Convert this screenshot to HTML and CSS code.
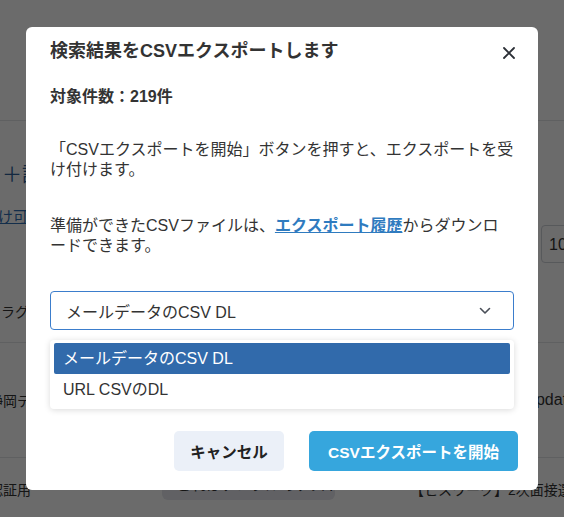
FILE: index.html
```html
<!DOCTYPE html>
<html lang="ja">
<head>
  <meta charset="UTF-8">
  <meta name="viewport" content="width=device-width, initial-scale=1.0">
  <title>CSVエクスポート</title>
  <link rel="stylesheet" href="styles.css">
</head>
<body>
  <div class="page">
    <div class="page-top"></div>
    <div class="block settings">
      <div class="add-link">＋設定を追加</div>
      <div class="settings-row">
        <a class="accept-link">け可能な設定</a>
        <div class="num-box">10</div>
      </div>
      <div class="flag">フラグ</div>
    </div>
    <div class="block row">
      <span class="cell-left">静岡テスト</span>
      <span class="cell-right">update</span>
    </div>
    <div class="block row last">
      <span class="cell-left">認証用</span>
      <span class="pill">これはテンプルのテスト</span>
      <span class="cell-title">【ヒスワーク】2次面接選考</span>
    </div>
  </div>

  <div class="overlay"></div>

  <div class="modal">
    <div class="modal-head">
      <h2>検索結果をCSVエクスポートします</h2>
      <svg class="close" width="12" height="12" viewBox="0 0 12 12">
        <path d="M1 1 L11 11 M11 1 L1 11" stroke="#2b2f36" stroke-width="1.8" stroke-linecap="round"/>
      </svg>
    </div>
    <p class="count">対象件数：219件</p>
    <p class="text">「CSVエクスポートを開始」ボタンを押すと、エクスポートを受け付けます。</p>
    <p class="text">準備ができたCSVファイルは、<a class="history">エクスポート履歴</a>からダウンロードできます。</p>

    <div class="field">
      <div class="select">
        <span>メールデータのCSV DL</span>
        <svg width="12" height="8" viewBox="0 0 12 8">
          <path d="M1.5 1.5 L6 6 L10.5 1.5" fill="none" stroke="#4a4f58" stroke-width="1.6" stroke-linecap="round" stroke-linejoin="round"/>
        </svg>
      </div>
      <ul class="options">
        <li class="active">メールデータのCSV DL</li>
        <li>URL CSVのDL</li>
      </ul>
    </div>

    <div class="modal-foot">
      <button class="btn btn-cancel">キャンセル</button>
      <button class="btn btn-primary">CSVエクスポートを開始</button>
    </div>
  </div>
</body>
</html>
```

FILE: styles.css
```css
body {
  margin: 0;
  padding: 0;
  background: #fff;
  overflow: hidden;
  font-family: "Liberation Sans", "Noto Sans CJK JP", sans-serif;
  color: #333;
}
.page {
  width: 564px;
  height: 517px;
  overflow: hidden;
}
.page-top {
  height: 120px;
  border-bottom: 1px solid #e2e4e8;
}
.block {
  border-bottom: 1px solid #e2e4e8;
}
.settings {
  height: 221px;
}
.add-link {
  padding-top: 43px;
  padding-left: 2px;
  font-size: 20px;
  line-height: 22px;
  color: #2f5f99;
}
.settings-row {
  display: flex;
  justify-content: space-between;
  align-items: flex-start;
  margin-top: 20px;
}
.accept-link {
  margin-left: -2px;
  font-size: 15px;
  line-height: 22px;
  color: #2f6fb3;
  text-decoration: underline;
}
.num-box {
  width: 40px;
  height: 38px;
  margin-top: 19px;
  margin-right: -17px;
  box-sizing: border-box;
  border: 1px solid #cfd3da;
  border-radius: 4px;
  padding: 9px 7px;
  font-size: 16px;
  line-height: 20px;
}
.flag {
  margin-top: 39px;
  margin-left: -13px;
  font-size: 14px;
  line-height: 20px;
}
.row {
  height: 114px;
  display: flex;
  justify-content: space-between;
  align-items: center;
  font-size: 14px;
}
.row > span {
  flex-shrink: 0;
  white-space: nowrap;
}
.row .cell-left {
  margin-left: -11px;
}
.row .cell-right {
  margin-right: -12px;
  font-size: 16px;
}
.row.last {
  height: 59px;
  justify-content: flex-start;
  align-items: flex-start;
  padding-top: 21px;
  border-bottom: none;
}
.pill {
  width: 173px;
  box-sizing: border-box;
  margin-left: 131px;
  margin-top: -12px;
  padding: 6px 14px;
  background: #e6e8ee;
  border-radius: 6px;
  font-size: 15px;
  overflow: hidden;
}
.cell-title {
  margin-left: 75px;
  font-size: 14px;
}
.overlay {
  position: absolute;
  top: 0;
  left: 0;
  width: 100%;
  height: 100%;
  background: rgba(0, 0, 0, 0.58);
}
.modal {
  position: absolute;
  top: 27px;
  left: 26px;
  width: 512px;
  box-sizing: border-box;
  background: #fff;
  border-radius: 6px;
  padding: 13px 20px 19px 24px;
}
.modal-head {
  display: flex;
  justify-content: space-between;
  align-items: center;
}
.modal-head h2 {
  margin: 0;
  font-size: 18px;
  line-height: 22px;
  font-weight: bold;
  color: #333;
}
.close {
  margin-right: 3px;
  margin-top: 4px;
}
.count {
  margin: 24px 0 0;
  font-size: 16px;
  line-height: 22px;
  font-weight: bold;
}
.text {
  margin: 32px 0 0;
  font-size: 16px;
  line-height: 20px;
  width: 464px;
}
.text + .text {
  margin-top: 36px;
}
.history {
  color: #2f7bbf;
  font-weight: bold;
  text-decoration: underline;
}
.field {
  position: relative;
  margin-top: 35px;
  width: 464px;
}
.select {
  height: 39px;
  box-sizing: border-box;
  border: 1px solid #3b7dcc;
  border-radius: 4px;
  display: flex;
  justify-content: space-between;
  align-items: center;
  padding: 0 22px 0 15px;
  font-size: 16px;
}
.options {
  position: absolute;
  top: 49px;
  left: 0;
  right: 0;
  margin: 0;
  padding: 3px 4px 4px;
  list-style: none;
  background: #fff;
  border-radius: 4px;
  box-shadow: 0 1px 6px rgba(0, 0, 0, 0.15);
  font-size: 16px;
}
.options li {
  height: 31px;
  line-height: 31px;
  padding-left: 9px;
  border-radius: 2px;
  color: #333;
}
.options li.active {
  background: #316aab;
  color: #fff;
}
.modal-foot {
  display: flex;
  justify-content: flex-end;
  gap: 25px;
  margin-top: 101px;
}
.btn {
  height: 40px;
  border: none;
  border-radius: 5px;
  padding: 0;
  font-family: inherit;
  font-size: 15.5px;
  font-weight: bold;
  cursor: pointer;
}
.btn-cancel {
  width: 110px;
  background: #ebf0f8;
  color: #222;
}
.btn-primary {
  width: 209px;
  background: #36a6dd;
  color: #fff;
}
```
